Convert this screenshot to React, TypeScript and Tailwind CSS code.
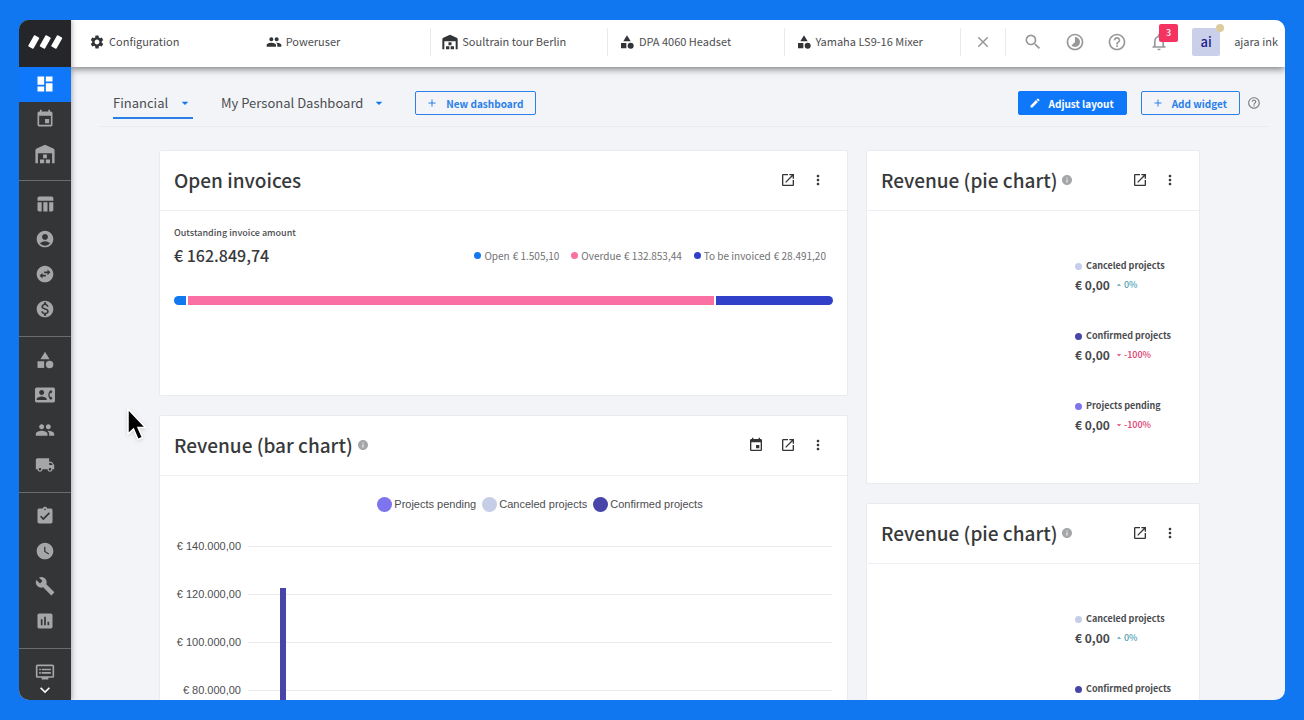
import type { ReactNode } from "react";
import {
  MdAccountCircle,
  MdAdd,
  MdArrowDropDown,
  MdArrowDropUp,
  MdAssessment,
  MdAssignmentTurnedIn,
  MdBuild,
  MdCategory,
  MdClose,
  MdContactPhone,
  MdDashboard,
  MdDvr,
  MdEdit,
  MdEvent,
  MdHelpOutline,
  MdInfo,
  MdKeyboardArrowDown,
  MdLocalShipping,
  MdMonetizationOn,
  MdMoreVert,
  MdNotificationsNone,
  MdOpenInNew,
  MdPeople,
  MdSearch,
  MdSettings,
  MdSwapHorizontalCircle,
  MdTableChart,
  MdTimelapse,
  MdWatchLater,
} from "react-icons/md";

const Warehouse = ({ className }: { className?: string }) => (
  <svg className={className} viewBox="0 0 24 24" fill="currentColor">
    <path d="M12 1 2 5.500C1.200 5.900.5 6.800.5 7.700V23h3V11h17v12h3V7.700c0-.9-.7-1.800-1.500-2.200L12 1z" />
    <path d="M9.700 12.500h4.600V17H9.700zM6 18.500h5V23H6zM13 18.500h5V23h-5z" />
  </svg>
);

const sidebarGroups = [
  [
    { label: "Dashboard", icon: <MdDashboard className="size-5" />, active: true },
    { label: "Calendar", icon: <MdEvent className="size-5" /> },
    { label: "Warehouse", icon: <Warehouse className="size-5" /> },
  ],
  [
    { label: "Planner", icon: <MdTableChart className="size-5" /> },
    { label: "Crew", icon: <MdAccountCircle className="size-5" /> },
    { label: "Subrent", icon: <MdSwapHorizontalCircle className="size-5" /> },
    { label: "Invoices", icon: <MdMonetizationOn className="size-5" /> },
  ],
  [
    { label: "Equipment", icon: <MdCategory className="size-5" /> },
    { label: "Contacts", icon: <MdContactPhone className="size-5" /> },
    { label: "Crew members", icon: <MdPeople className="size-5" /> },
    { label: "Vehicles", icon: <MdLocalShipping className="size-5" /> },
  ],
  [
    { label: "Tasks", icon: <MdAssignmentTurnedIn className="size-5" /> },
    { label: "Time registration", icon: <MdWatchLater className="size-5" /> },
    { label: "Maintenance", icon: <MdBuild className="size-5" /> },
    { label: "Statistics", icon: <MdAssessment className="size-5" /> },
  ],
  [{ label: "Portal", icon: <MdDvr className="size-5" /> }],
];

const tabs = [
  { label: "Configuration", icon: <MdSettings className="size-4" /> },
  { label: "Poweruser", icon: <MdPeople className="size-4" /> },
  { label: "Soultrain tour Berlin", icon: <Warehouse className="size-4" /> },
  { label: "DPA 4060 Headset", icon: <MdCategory className="size-4" /> },
  { label: "Yamaha LS9-16 Mixer", icon: <MdCategory className="size-4" /> },
];

const invoices = [
  { label: "Open", amount: "€ 1.505,10", color: "bg-[#1178f0]", share: 12 },
  { label: "Overdue", amount: "€ 132.853,44", color: "bg-[#fa70a4]", share: 525 },
  { label: "To be invoiced", amount: "€ 28.491,20", color: "bg-[#3040c8]", share: 117 },
];

const pieLegend = [
  { label: "Canceled projects", change: "0%", up: true, color: "bg-[#c6cde6]" },
  { label: "Confirmed projects", change: "-100%", up: false, color: "bg-[#4845a8]" },
  { label: "Projects pending", change: "-100%", up: false, color: "bg-[#7d74ee]" },
];

const barLegend = [
  { label: "Projects pending", color: "bg-[#7d74ee]" },
  { label: "Canceled projects", color: "bg-[#c6cde6]" },
  { label: "Confirmed projects", color: "bg-[#4845a8]" },
];

const MAX_REVENUE = 140000;
const confirmedRevenue = 122500;
const ticks = [
  "€ 140.000,00",
  "€ 120.000,00",
  "€ 100.000,00",
  "€ 80.000,00",
  "€ 60.000,00",
  "€ 40.000,00",
  "€ 20.000,00",
  "€ 0,00",
];

const Sidebar = () => (
  <aside className="relative z-20 flex w-[52px] shrink-0 flex-col overflow-hidden bg-[#343537] shadow-[1px_0_5px_rgba(0,0,0,0.3)]">
    <a href="#" aria-label="Home" className="flex h-[47px] shrink-0 items-center justify-center bg-[#252629] pb-1">
      <svg className="h-4 w-9" viewBox="0 0 36 16" fill="#fff" stroke="#fff" strokeWidth="1.500" strokeLinejoin="round">
        <path d="M7.500 2 11.500 4.200 6 14 2 11.800z" />
        <path d="M19 2 23 4.200 17.500 14 13.500 11.800z" />
        <path d="M30.500 2 34.500 4.200 29 14 25 11.800z" />
      </svg>
    </a>
    <nav className="flex flex-col">
      {sidebarGroups.map((group, i) => (
        <div key={i} className={i === 0 ? "pb-2" : "border-t border-[#6b6c6e] pt-1.5 pb-[9px]"}>
          {group.map((item) => (
            <a
              key={item.label}
              href="#"
              aria-label={item.label}
              className={`flex h-[35px] items-center justify-center pb-px ${item.active ? "bg-[#0f78fa] text-white" : "text-[#a5a6a8]"}`}
            >
              {item.icon}
            </a>
          ))}
        </div>
      ))}
    </nav>
    <button aria-label="Show more" className="absolute inset-x-0 bottom-0 flex justify-center text-white">
      <MdKeyboardArrowDown className="size-5" />
    </button>
  </aside>
);

const TopBar = () => (
  <header className="relative z-10 flex h-[47px] shrink-0 items-center bg-white px-[7px] pb-1 shadow-[0_2px_7px_rgba(0,0,0,0.5)]">
    <nav className="flex min-w-0 flex-1">
      {tabs.map((tab, i) => (
        <a
          key={tab.label}
          href="#"
          className={`flex h-7 min-w-0 flex-1 items-center gap-1 border-r pl-[11px] text-[11px] whitespace-nowrap ${i === 0 ? "border-transparent" : "border-[#e9eaec]"}`}
        >
          <span className="text-[#333436]">{tab.icon}</span>
          {tab.label}
        </a>
      ))}
    </nav>
    <button aria-label="Close tabs" className="flex h-7 w-[45px] items-center justify-center border-r border-[#e9eaec] text-[#97989a]">
      <MdClose className="size-[18px]" />
    </button>
    <div className="ml-1.5 flex items-center text-[#97989a]">
      <button aria-label="Search" className="flex w-[42px] justify-center">
        <MdSearch className="size-5" />
      </button>
      <button aria-label="Time" className="flex w-[42px] justify-center">
        <MdTimelapse className="size-5" />
      </button>
      <button aria-label="Help" className="flex w-[42px] justify-center">
        <MdHelpOutline className="size-5" />
      </button>
      <button aria-label="Notifications" className="relative flex w-[42px] justify-center">
        <MdNotificationsNone className="size-5" />
        <span className="absolute -top-2 right-0.5 flex h-[18px] w-[19px] items-center justify-center rounded-xs bg-[#f53360] text-[9px] leading-none font-medium text-white">
          3
        </span>
      </button>
    </div>
    <button className="ml-3 flex items-center gap-3.5 text-[11px]">
      <span className="relative flex size-7 items-center justify-center rounded-xs bg-[#cbd0ea] text-[13px] font-medium text-[#1c1c8c]">
        ai
        <span className="absolute -top-1 -right-1 size-2 rounded-full bg-[#dccb9c]" />
      </span>
      ajara ink
    </button>
  </header>
);

const Toolbar = () => (
  <div className="mr-4 ml-7 flex h-[60px] items-start border-b border-[#e8eaee] pt-6 pr-2 pl-3.5">
    <div className="flex gap-7 text-[13px]">
      <button className="flex h-7 w-20 items-start justify-between border-b-2 border-[#2a80e8] leading-6">
        Financial
        <MdArrowDropDown className="mt-1 size-4 text-[#1178f0]" />
      </button>
      <button className="flex h-7 items-start gap-2 leading-6">
        My Personal Dashboard
        <MdArrowDropDown className="mt-1 size-4 text-[#1178f0]" />
      </button>
    </div>
    <button className="ml-7 flex h-6 items-center gap-2 rounded-xs border border-[#2a80e8] px-3 text-[10px] font-bold text-[#2a80e8]">
      <MdAdd className="-ml-0.5 size-3" />
      New dashboard
    </button>
    <div className="ml-auto flex items-center text-[10px] font-bold">
      <button className="flex h-6 items-center gap-2 rounded-xs border border-[#0f78fa] bg-[#0f78fa] px-3 text-white">
        <MdEdit className="-ml-0.5 size-3" />
        Adjust layout
      </button>
      <button className="ml-3.5 flex h-6 items-center gap-2 rounded-xs border border-[#2a80e8] px-3 text-[#2a80e8]">
        <MdAdd className="-ml-0.5 size-3" />
        Add widget
      </button>
      <button aria-label="Dashboard help" className="ml-[7px] text-[#7c7d80]">
        <MdHelpOutline className="size-3.5" />
      </button>
    </div>
  </div>
);

type CardProps = {
  title: string;
  info?: boolean;
  calendar?: boolean;
  className?: string;
  children: ReactNode;
};

const Card = ({ title, info, calendar, className = "", children }: CardProps) => (
  <section className={`rounded-xs border border-[#e9ebef] bg-white ${className}`}>
    <div className="flex h-[60px] items-center border-b border-[#eeeff2] pr-[23px] pb-0.5 pl-3.5">
      <h2 className="text-[19px] leading-7 font-medium text-[#38393b]">{title}</h2>
      {info && <MdInfo className="ml-1 size-3 text-[#a5a6a8]" />}
      <div className="ml-auto flex items-center gap-4 text-[#333436]">
        {calendar && (
          <button aria-label="Period">
            <MdEvent className="size-4" />
          </button>
        )}
        <button aria-label="Open in new window">
          <MdOpenInNew className="size-4" />
        </button>
        <button aria-label="More">
          <MdMoreVert className="-mx-0.5 size-4" />
        </button>
      </div>
    </div>
    {children}
  </section>
);

const OpenInvoices = () => (
  <Card title="Open invoices" className="h-[246px]">
    <div className="px-3.5 pt-3">
      <p className="text-[9px] leading-5 font-medium">Outstanding invoice amount</p>
      <div className="flex items-center justify-between">
        <p className="text-base leading-6 font-medium text-[#38393b]">€ 162.849,74</p>
        <ul className="flex gap-3 pr-[7px] text-[10px] text-[#707173]">
          {invoices.map((item) => (
            <li key={item.label} className="flex items-center gap-[3px]">
              <span className={`size-[7px] rounded-full ${item.color}`} />
              {item.label}
              <span>{item.amount}</span>
            </li>
          ))}
        </ul>
      </div>
      <div className="mt-[29px] flex h-[9px] gap-0.5 overflow-hidden rounded-full">
        {invoices.map((item) => (
          <div key={item.label} className={item.color} style={{ flexGrow: item.share }} />
        ))}
      </div>
    </div>
  </Card>
);

const BarChart = () => (
  <Card title="Revenue (bar chart)" info calendar>
    <div className="px-[15px] pt-5 pb-6 font-['Liberation_Sans',sans-serif] text-[11px]">
      <ul className="flex justify-center gap-1.5 pl-[73px]">
        {barLegend.map((item) => (
          <li key={item.label} className="flex items-center gap-0.5 leading-4">
            <span className={`size-[15px] rounded-full ${item.color}`} />
            {item.label}
          </li>
        ))}
      </ul>
      <div className="relative mt-[10px]">
        {ticks.map((tick) => (
          <div key={tick} className="flex h-12 items-center gap-[7px]">
            <span className="w-[66px] text-right whitespace-nowrap">{tick}</span>
            <span className="h-px flex-1 bg-[#e9eaee]" />
          </div>
        ))}
        {/* plot area runs between the first and the last gridline */}
        <div className="absolute top-6 right-0 bottom-6 left-[73px]">
          <div
            className="absolute bottom-0 left-8 w-1.5 bg-[#4845a8]"
            style={{ height: `${(confirmedRevenue / MAX_REVENUE) * 100}%` }}
          />
        </div>
      </div>
    </div>
  </Card>
);

const PieChart = () => (
  <Card title="Revenue (pie chart)" info className="h-[334px]">
    <ul className="ml-auto flex w-[124px] flex-col gap-8 pt-[46px]">
      {pieLegend.map((item) => (
        <li key={item.label}>
          <p className="flex items-center gap-1 text-[9px] leading-[18px] font-bold">
            <span className={`size-[7px] rounded-full ${item.color}`} />
            {item.label}
          </p>
          <p className="flex items-center text-xs leading-5 font-bold text-[#48494b]">
            € 0,00
            <span className={`ml-1 flex items-center text-[9px] font-medium ${item.up ? "text-[#4fa3b5]" : "text-[#e0386c]"}`}>
              {item.up ? <MdArrowDropUp className="size-2.5" /> : <MdArrowDropDown className="size-2.5" />}
              {item.change}
            </span>
          </p>
        </li>
      ))}
    </ul>
  </Card>
);

const Cursor = () => (
  <svg className="pointer-events-none absolute top-[406px] left-[124px] z-30 h-9 w-6 drop-shadow" viewBox="0 0 24 36">
    <path d="M4 3v25l5.500-5 4.500 10.500 4.500-2L14 21.500h7.500z" fill="#000" stroke="#fff" strokeWidth="1.500" />
  </svg>
);

export default function App() {
  return (
    <div className="h-screen bg-[#1077f1] px-[19px] py-5 font-['Noto_Sans_CJK_SC',sans-serif] text-[#4c4d50]">
      <div className="flex h-full overflow-hidden rounded-[10px] bg-[#f2f4f8]">
        <Sidebar />
        <div className="flex min-w-0 flex-1 flex-col">
          <TopBar />
          <main className="min-h-0 flex-1 overflow-y-auto [scrollbar-width:none]">
            <Toolbar />
            <div className="grid grid-cols-[33fr_16fr] items-start gap-[18px] pt-[23px] pr-[85px] pb-6 pl-[88px]">
              <div className="flex flex-col gap-[19px]">
                <OpenInvoices />
                <BarChart />
              </div>
              <div className="flex flex-col gap-[19px]">
                <PieChart />
                <PieChart />
              </div>
            </div>
          </main>
        </div>
      </div>
      <Cursor />
    </div>
  );
}
